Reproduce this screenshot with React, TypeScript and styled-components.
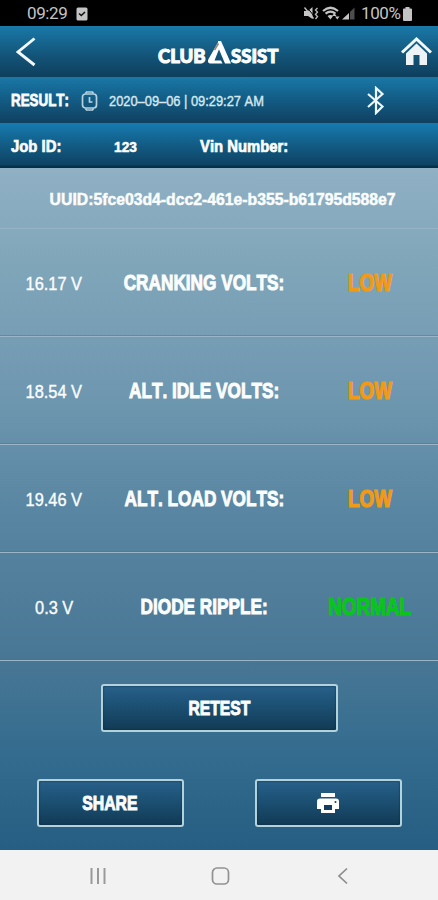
import React from "react";
import styled, { createGlobalStyle } from "styled-components";

const Global = createGlobalStyle`
  *, *::before, *::after { box-sizing: border-box; }
  body { margin: 0; background: #000; font-family: "Liberation Sans", Arial, sans-serif; }
  button { font: inherit; color: inherit; cursor: pointer; }
`;

const Screen = styled.main`
  width: 438px;
  height: 900px;
  display: flex;
  flex-direction: column;
  overflow: hidden;
  color: #fbfdfd;
`;

const Txt = styled.span<{ $size: number; $sx: number; $bold?: boolean; $left?: boolean; $stroke?: number; $color?: string }>`
  display: block;
  white-space: nowrap;
  font-size: ${(p) => p.$size}px;
  line-height: 1;
  font-weight: ${(p) => (p.$bold ? 700 : 400)};
  font-kerning: none;
  color: ${(p) => p.$color ?? "inherit"};
  transform: scaleX(${(p) => p.$sx});
  transform-origin: ${(p) => (p.$left ? "left" : "center")} center;
  -webkit-text-stroke: ${(p) => p.$stroke ?? 0}px currentColor;
`;

const StatusBar = styled.div`
  height: 26px;
  flex: none;
  background: #000;
  color: #c4c4c4;
  display: flex;
  align-items: center;
  justify-content: space-between;
  padding: 1px 26px 0 27px;
  font: 17px/1 Roboto, sans-serif;
`;

const StatusGroup = styled.div`
  display: flex;
  align-items: center;
`;

const Clock = styled.span`
  width: 49px;
  letter-spacing: -0.4px;
`;

const Battery = styled.span`
  width: 39px;
  margin: 0 3px 0 5px;
  letter-spacing: -0.4px;
`;

const Header = styled.header`
  height: 51px;
  flex: none;
  display: flex;
  align-items: center;
  justify-content: space-between;
  padding: 0 6px 0 16px;
  background: linear-gradient(#1979a8, #135377 60%, #0e3f5d);
`;

const Logo = styled.div`
  display: flex;
  align-items: flex-end;
  height: 26px;
  margin-left: 1px;
`;

const LogoText = styled.span<{ $w: number }>`
  width: ${(p) => p.$w}px;
  font: 900 18.5px/18px Lato, sans-serif;
  white-space: nowrap;
  -webkit-text-stroke: 1px currentColor;
`;

const ResultBar = styled.section`
  height: 46px;
  flex: none;
  display: flex;
  align-items: center;
  padding: 1px 53px 0 11px;
  background: linear-gradient(#1a78a6, #13618b 40%, #104060);
`;

const JobBar = styled.section`
  height: 45px;
  flex: none;
  display: flex;
  align-items: center;
  padding: 2px 0 0 11px;
  background: linear-gradient(#167bb1, #125b83 50%, #0e4263 94%, #04304a 95%);
`;

const Cell = styled.div<{ $w?: number }>`
  width: ${(p) => (p.$w ? `${p.$w}px` : "auto")};
  flex: ${(p) => (p.$w ? "none" : "1")};
`;

const Panel = styled.section`
  height: 682px;
  flex: none;
  background: linear-gradient(#90b0c4, #7fa5b9 15%, #6f97b0 33%, #5986a2 50%, #477694 73%, #326b8e 87%, #265d82);
`;

const Uuid = styled.div`
  height: 61px;
  display: flex;
  align-items: center;
  justify-content: center;
  padding: 2px 0 0 8px;
  border-bottom: 1px solid #95b3c5;
`;

const Row = styled.div`
  height: 108px;
  display: grid;
  grid-template-columns: 108px 192px 140px;
  align-items: center;
  justify-items: center;
  padding-top: 1px;
  border-bottom: 1px solid #9bb4c7;
  box-shadow: inset 0 -1px 0 #47708a66;
`;

const Actions = styled.div`
  display: flex;
  flex-wrap: wrap;
  justify-content: center;
  padding-top: 23px;
  row-gap: 47px;
  column-gap: 71px;
`;

const Action = styled.button<{ $w: number }>`
  width: ${(p) => p.$w}px;
  height: 48px;
  display: flex;
  align-items: center;
  justify-content: center;
  padding: 0;
  border: 2px solid #b3d2d9;
  border-radius: 3px;
  background: linear-gradient(#28608a, #1c5073 45%, #123a55);
  box-shadow: inset 0 0 2px #062740;
`;

const NavBar = styled.nav`
  flex: 1;
  display: flex;
  align-items: center;
  justify-content: space-between;
  padding: 2px 89px 0 89px;
  background: #f2f2f2;
`;

const rows = [
  { value: "16.17 V", label: "CRANKING VOLTS:", status: "LOW" },
  { value: "18.54 V", label: "ALT. IDLE VOLTS:", status: "LOW" },
  { value: "19.46 V", label: "ALT. LOAD VOLTS:", status: "LOW" },
  { value: "0.3 V", label: "DIODE RIPPLE:", status: "NORMAL" },
];

export default function App() {
  return (
    <Screen>
      <Global />
      <StatusBar>
        <StatusGroup>
          <Clock>09:29</Clock>
          <svg width="12" height="14" viewBox="0 0 12 14">
            <rect x="0.5" y="0.5" width="11" height="13" rx="1.5" fill="#c4c4c4" />
            <path d="M3 6.5l2.3 2L9 5" fill="none" stroke="#111" strokeWidth="1.6" />
          </svg>
        </StatusGroup>
        <StatusGroup>
          <svg width="52" height="15" viewBox="0 0 52 15" fill="#c4c4c4">
            <path d="M0 5h4l4.500-4v12L4 10H0z" />
            <path d="M2 0l8 10" stroke="#000" strokeWidth="1" />
            <path d="M0.500 1.500l9 11" stroke="#c4c4c4" strokeWidth="1.300" />
            <path d="M13.500 2l-2 2 2 2-2 2.500 2 2-2 2.500" stroke="#b4b4b4" strokeWidth="1.400" fill="none" />
            <path d="M19 5q7.500-6.500 15 0M21.500 7.700q5-4 10 0" stroke="#c4c4c4" strokeWidth="2.200" fill="none" />
            <path d="M23.500 10q3-2 5.500 0l-2.500 3.500zM28 10l2.300-3 2.200 3zM31 10.500h4.500l-2.200 3z" />
            <path d="M38 13.500l7-6.500v6.500z" />
            <path d="M46 13.500V6l4.500-4.500v12z" fill="#4d4d4d" />
          </svg>
          <Battery>100%</Battery>
          <svg width="9" height="14" viewBox="0 0 9 14" fill="#c4c4c4">
            <path d="M2.5 0h4v1.5H8q1 0 1 1V13q0 1-1 1H1q-1 0-1-1V2.500q0-1 1-1h1.500z" />
          </svg>
        </StatusGroup>
      </StatusBar>
      <Header>
        <svg width="20" height="30" viewBox="0 0 20 30">
          <path d="M18.500 1.500L2 15l16.500 13" fill="none" stroke="#f3f8fa" strokeWidth="2.900" />
        </svg>
        <Logo>
          <LogoText $w={49}>CLUB</LogoText>
          <svg width="24" height="25" viewBox="0 0 24 25">
            <path d="M11 1h3L24 23.500h-6L11 7z" fill="#fff" />
            <path d="M11 2.500L1.500 19q-2 4.500 3 4.500h11L14 20.500H7.500L12.500 8z" fill="#fff" />
            <path d="M11.500 3.500L7.500 10" stroke="#9c8876" strokeWidth="1.600" />
          </svg>
          <LogoText $w={49}>SSIST</LogoText>
        </Logo>
        <svg width="31" height="29" viewBox="0 0 31 29">
          <path d="M1 15.500L15.500 2 30 15.500" fill="none" stroke="#f5f8f9" strokeWidth="3" />
          <path d="M5 16.500L15.500 6.500 26 16.500V28h-7.500V18h-6v10H5z" fill="#eef3f5" />
        </svg>
      </Header>
      <ResultBar>
        <Cell $w={70}><Txt $size={16.5} $sx={0.81} $bold $left $stroke={0.8}>RESULT:</Txt></Cell>
        <Cell $w={28}>
          <svg width="17" height="20" viewBox="0 0 17 20" fill="none" stroke="#b6d2df" strokeWidth="1.700" display="block">
            <path d="M4.500 2.500L5.500 1h6l1 1.500M4.500 17.500l1 1.500h6l1-1.500" />
            <rect x="1.500" y="3" width="14" height="14" rx="3" />
            <path d="M8.500 6v5h3" />
          </svg>
        </Cell>
        <Cell><Txt $size={14} $sx={0.918} $left $stroke={0.4} $color="#d5e7ef">2020–09–06 | 09:29:27 AM</Txt></Cell>
        <svg width="19" height="29" viewBox="0 0 19 29" fill="none" stroke="#eef6f9" strokeWidth="2.200">
          <path d="M2 8l14.500 12.500L10 27V2l6.500 6L2 21" />
        </svg>
      </ResultBar>
      <JobBar>
        <Cell $w={103}><Txt $size={16.5} $sx={0.9} $bold $left $stroke={0.7}>Job ID:</Txt></Cell>
        <Cell $w={86}><Txt $size={14} $sx={0.98} $bold $left $stroke={0.5}>123</Txt></Cell>
        <Cell><Txt $size={16.5} $sx={0.9} $bold $left $stroke={0.7}>Vin Number:</Txt></Cell>
      </JobBar>
      <Panel>
        <Uuid><Txt $size={17} $sx={0.927} $bold $stroke={0.5}>UUID:5fce03d4-dcc2-461e-b355-b61795d588e7</Txt></Uuid>
        {rows.map((r) => (
          <Row key={r.label}>
            <Txt $size={19} $sx={0.86} $stroke={0.4}>{r.value}</Txt>
            <Txt $size={22.5} $sx={0.765} $bold $stroke={1}>{r.label}</Txt>
            <Txt $size={24} $sx={0.785} $bold $stroke={1.2} $color={r.status === "LOW" ? "#f19a16" : "#09c51b"}>{r.status}</Txt>
          </Row>
        ))}
        <Actions>
          <Action $w={237}><Txt $size={20.5} $sx={0.765} $bold $stroke={1}>RETEST</Txt></Action>
          <Action $w={147}><Txt $size={20.5} $sx={0.77} $bold $stroke={1}>SHARE</Txt></Action>
          <Action $w={147} aria-label="Print">
            <svg width="24" height="22" viewBox="0 0 24 22" fill="#fff">
              <path d="M5 1h14v4H5zM4 6.500h16q3 0 3 3V17h-4v4H5v-4H1V9.500q0-3 3-3z" />
              <path d="M8 13h8v5H8z" fill="#123d60" />
              <circle cx="19.500" cy="10" r="1" fill="#123d60" />
            </svg>
          </Action>
        </Actions>
      </Panel>
      <NavBar>
        <svg width="18" height="18" viewBox="0 0 18 18" stroke="#999" strokeWidth="2">
          <path d="M2.500 1v16M9 1v16M15.500 1v16" />
        </svg>
        <svg width="20" height="20" viewBox="0 0 20 20" fill="none" stroke="#929292" strokeWidth="1.700">
          <rect x="1.500" y="2" width="16" height="16" rx="4.500" />
        </svg>
        <svg width="14" height="18" viewBox="0 0 14 18" fill="none" stroke="#8c8c8c" strokeWidth="1.700">
          <path d="M12 1.500L4 9l8 7.500" />
        </svg>
      </NavBar>
    </Screen>
  );
}
